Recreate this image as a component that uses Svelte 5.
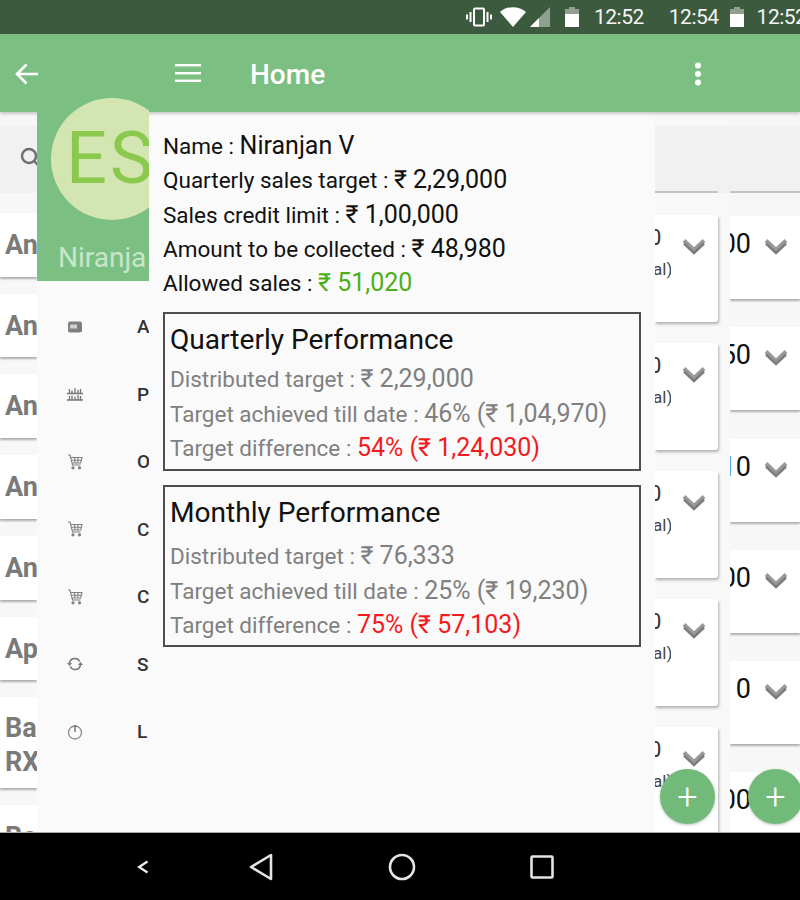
<script>
  const rows = [
    { h: 64, lines: ['An'] }, { h: 63, lines: ['An'] }, { h: 64, lines: ['An'] }, { h: 64, lines: ['An'] },
    { h: 64, lines: ['An'] }, { h: 63, lines: ['Ap'] }, { h: 91, lines: ['Ba', 'RX'] }, { h: 64, lines: ['Be'] }
  ];
  const rightRows = ['00', '50', '10', '00', '0', '00'];
  const menu = [
    { icon: 'card', label: 'A' }, { icon: 'stats', label: 'P' }, { icon: 'cart', label: 'O' },
    { icon: 'cart', label: 'C' }, { icon: 'cart', label: 'C' }, { icon: 'sync', label: 'S' }, { icon: 'power', label: 'L' }
  ];
  const info = [
    ['Name : ', 'Niranjan V', ''],
    ['Quarterly sales target : ', '₹ 2,29,000', ''],
    ['Sales credit limit : ', '₹ 1,00,000', ''],
    ['Amount to be collected : ', '₹ 48,980', ''],
    ['Allowed sales : ', '₹ 51,020', 'green']
  ];
  const boxes = [
    { cls: 'q', title: 'Quarterly Performance', target: '₹ 2,29,000', achieved: '46% (₹ 1,04,970)', diff: '54% (₹ 1,24,030)' },
    { cls: 'm', title: 'Monthly Performance', target: '₹ 76,333', achieved: '25% (₹ 19,230)', diff: '75% (₹ 57,103)' }
  ];
  const labels = { target: 'Distributed target : ', achieved: 'Target achieved till date : ', diff: 'Target difference : ' };
</script>

{#snippet chevron()}
  <svg class="chev" width="26" height="18" viewBox="0 0 26 18">
    <path d="M3 3.500 13 13 23 3.500" fill="none" stroke="#9a9a9a" stroke-width="4"/>
    <path d="M3 6.500 13 16 23 6.500" fill="none" stroke="#7d7d7d" stroke-width="2.500"/>
  </svg>
{/snippet}

{#snippet battery()}
  <svg width="14" height="20" viewBox="0 0 14 20">
    <path d="M4 0h6v2h4v18H0V2h4z" fill="#8fa08f"/>
    <rect y="7" width="14" height="13" fill="#fff"/>
  </svg>
{/snippet}

<div class="screen">
  <header class="status">
    <svg width="26" height="20" viewBox="0 0 26 20" fill="none" stroke="#fff">
      <rect x="8" y="1.500" width="10" height="17" rx="1" stroke-width="2"/>
      <path d="M4.500 5v10M21.500 5v10" stroke-width="2"/>
      <path d="M1 7.500v5M25 7.500v5" stroke-width="2"/>
    </svg>
    <svg class="wifi" width="26" height="20" viewBox="0 0 26 20"><path d="M0 5C7-1.500 19-1.500 26 5L13 20z" fill="#fff"/></svg>
    <svg class="signal" width="20" height="20" viewBox="0 0 20 20">
      <path d="M20 0v20H0z" fill="#8fa08f"/><path d="M9 11v9H0z" fill="#fff"/>
    </svg>
    <span class="bat1">{@render battery()}</span>
    <span class="time t1">12:52</span>
    <span class="time t2">12:54</span>
    <span class="bat2">{@render battery()}</span>
    <span class="time t3">12:52</span>
  </header>

  <header class="appbar">
    <svg class="back" width="24" height="22" viewBox="0 0 24 22" fill="none" stroke="#fff" stroke-width="2.600">
      <path d="M23 11H2M11.500 1.500 2 11l9.500 9.500"/>
    </svg>
    <svg class="burger" width="26" height="18" viewBox="0 0 26 18" fill="#fff">
      <rect width="26" height="2.400" y="0"/><rect width="26" height="2.400" y="8"/><rect width="26" height="2.400" y="15.600"/>
    </svg>
    <h1>Home</h1>
    <svg class="dots" width="8" height="24" viewBox="0 0 8 24" fill="#fff">
      <circle cx="4" cy="3.500" r="3"/><circle cx="4" cy="12" r="3"/><circle cx="4" cy="20.500" r="3"/>
    </svg>
  </header>

  <main class="content">
    <section class="col left">
      <div class="search">
        <svg class="mag" width="24" height="24" viewBox="0 0 24 24" fill="none" stroke="#6e6e6e" stroke-width="2.400">
          <circle cx="11" cy="10" r="7"/><path d="M16 15l6 6"/>
        </svg>
      </div>
      <div class="rows">
        {#each rows as r}
          <div class="row" class:two={r.lines.length > 1} style="height:{r.h}px">
            {#each r.lines as l}<b>{l}</b>{/each}
          </div>
        {/each}
      </div>
    </section>

    <nav class="drawer">
      <div class="dhead">
        <div class="avatar">ES</div>
        <div class="uname">Niranjan V</div>
      </div>
      <ul>
        {#each menu as m}
          <li>
            <span class="mi">
              {#if m.icon === 'card'}
                <svg width="16" height="12" viewBox="0 0 16 12">
                  <rect x="1" y="0.500" width="14" height="11" rx="2" fill="#7f7f7f"/><rect x="3" y="3.500" width="7" height="4" fill="#d0d0d0"/>
                </svg>
              {:else if m.icon === 'stats'}
                <svg width="16" height="14" viewBox="0 0 16 14" fill="none" stroke="#777" stroke-width="1.300">
                  <path d="M0 6.500h16M0 13h16M2.500 6V2M5 6V3.500M8 6V1M11 6V3M13.500 6V2M2.500 12.500V9M5 12.500V8.500M8 12.500V9.500M11 12.500V8M13.500 12.500V9"/>
                </svg>
              {:else if m.icon === 'cart'}
                <svg width="16" height="16" viewBox="0 0 16 16" fill="none" stroke="#808080" stroke-width="1.100">
                  <path d="M1 1h2l2.500 10h8M3.700 3.500H15l-1.300 5.500H5M7.500 3.500 8 9M11 3.500 10.800 9M4.500 6.200h10"/>
                  <circle cx="6" cy="13.800" r="1.100" fill="#808080"/><circle cx="12.500" cy="13.800" r="1.100" fill="#808080"/>
                </svg>
              {:else if m.icon === 'sync'}
                <svg width="16" height="14" viewBox="0 0 16 14" fill="none" stroke="#777" stroke-width="1.500">
                  <path d="M2.500 6a5.500 5.500 0 0 1 10.300-1.500M13.500 8a5.500 5.500 0 0 1-10.300 1.500"/>
                  <path d="M0 6h5L2.500 9zM16 8h-5l2.500-3z" fill="#777" stroke="none"/>
                </svg>
              {:else}
                <svg width="16" height="16" viewBox="0 0 16 16" fill="none" stroke="#8a8a8a" stroke-width="1.300">
                  <circle cx="8" cy="8.500" r="6.500"/><path d="M8 1v7" stroke="#666"/>
                </svg>
              {/if}
            </span>
            <span class="ml">{m.label}</span>
          </li>
        {/each}
      </ul>
    </nav>

    <section class="panel">
      {#each info as [k, v, c]}
        <p class="line"><span class="k">{k}</span><span class="v {c}">{v}</span></p>
      {/each}
      {#each boxes as b}
        <div class="box {b.cls}">
          <h2>{b.title}</h2>
          <p class="line g"><span class="k">{labels.target}</span><span class="v">{b.target}</span></p>
          <p class="line g"><span class="k">{labels.achieved}</span><span class="v">{b.achieved}</span></p>
          <p class="line g"><span class="k">{labels.diff}</span><span class="v red">{b.diff}</span></p>
        </div>
      {/each}
    </section>

    <section class="col cards">
      <div class="search"><i></i></div>
      <div class="cardlist">
        {#each [0, 1, 2, 3, 4] as c}
          <div class="card">
            <div class="ctext"><span class="num">0</span><span class="sub">al)</span></div>
            {@render chevron()}
          </div>
        {/each}
      </div>
      <button class="fab" aria-label="Add">+</button>
    </section>

    <section class="col right">
      <div class="search"><i></i></div>
      <div class="rlist">
        {#each rightRows as r}
          <div class="rrow">
            <span class="num">{r}</span>
            {@render chevron()}
          </div>
        {/each}
      </div>
      <button class="fab" aria-label="Add">+</button>
    </section>
  </main>

  <footer class="navbar">
    <svg width="12" height="14" viewBox="0 0 12 14" fill="none" stroke="#eee" stroke-width="2.200"><path d="M10.500 1.500 2 7l8.500 5.500"/></svg>
    <svg class="tri" width="24" height="28" viewBox="0 0 24 28" fill="none" stroke="#e4e4e4" stroke-width="2.600" stroke-linejoin="round"><path d="M22 2v24L2 14z"/></svg>
    <svg class="circ" width="28" height="28" viewBox="0 0 28 28" fill="none" stroke="#e4e4e4" stroke-width="2.600"><circle cx="14" cy="14" r="12"/></svg>
    <svg class="sq" width="24" height="24" viewBox="0 0 24 24" fill="none" stroke="#e4e4e4" stroke-width="2.600" stroke-linejoin="round"><rect x="1.500" y="1.500" width="21" height="21" rx="1"/></svg>
  </footer>
</div>

<style>
  :global(body) { margin: 0; background: #000; }
  .screen {
    width: 800px; height: 900px; display: flex; flex-direction: column; overflow: hidden;
    font-family: Roboto, "Noto Sans", "DejaVu Sans", sans-serif; background: #f7f7f7;
  }
  p, h1, h2, ul { margin: 0; padding: 0; }

  .status { height: 34px; flex: none; background: #3c5a3e; display: flex; align-items: center; padding-left: 466px; color: #fff; white-space: nowrap; box-sizing: border-box; overflow: hidden; }
  .status > * { flex: none; }
  .wifi { margin-left: 8px; }
  .signal { margin-left: 4px; }
  .bat1 { margin-left: 15px; display: flex; }
  .bat2 { margin-left: 11px; display: flex; }
  .time { font-size: 21px; letter-spacing: -.5px; color: #f4f4f4; }
  .t1 { margin-left: 15px; }
  .t2 { margin-left: 25px; }
  .t3 { margin-left: 13px; }

  .appbar {
    height: 78px; flex: none; background: #7cbf83; display: flex; align-items: center; color: #fff; box-sizing: border-box;
    box-shadow: 0 2px 3px rgba(0,0,0,.2); position: relative; z-index: 2; padding: 2px 0 0 15px;
  }
  .appbar > * { flex: none; }
  .back { margin-top: -1px; }
  .burger { margin-left: 136px; margin-top: -2px; }
  h1 { font-size: 28px; font-weight: 500; margin-left: 49px; }
  .dots { margin-left: 369px; }

  .content { flex: 1; min-height: 0; display: grid; grid-template-columns: 37px 112px 506px 75px 70px; }
  .col { position: relative; padding-top: 14px; min-width: 0; overflow: hidden; height: 720px; box-sizing: border-box; }
  .search { height: 67px; background: #f1f1f1; position: relative; box-sizing: border-box; }
  .search i { display: block; position: absolute; left: 0; bottom: 0; height: 2px; background: #c4c4c4; }
  .cards .search i { width: 63px; }
  .right .search i { width: 100%; }
  .mag { position: absolute; left: 18px; top: 20px; }

  .rows { padding-top: 20px; display: flex; flex-direction: column; gap: 17px; }
  .row {
    flex: none; background: #fff; box-shadow: 0 2px 2px rgba(0,0,0,.3); padding-left: 5px; overflow: hidden;
    display: flex; flex-direction: column; justify-content: center; color: #7a7a7a; font-size: 27px; line-height: 34px;
  }
  .row.two { padding-top: 4px; box-sizing: border-box; }

  .drawer { position: relative; z-index: 3; min-width: 0; overflow: hidden; margin-top: -34px; height: 754px; background: linear-gradient(#fafafa, #fafafa) 0 34px no-repeat; }
  .dhead { height: 203px; background: linear-gradient(#7cbf83, #7cbf83) 0 20px no-repeat; position: relative; overflow: hidden; }
  .avatar {
    position: absolute; left: 14px; top: 20px; width: 122px; height: 122px; border-radius: 50%;
    background: #d3e6b1; color: #8ac94d; font-size: 72px; line-height: 122px; padding-left: 15px; box-sizing: border-box; white-space: nowrap; letter-spacing: 3px;
  }
  .uname { position: absolute; left: 21px; top: 163px; width: 88px; overflow: hidden; font-size: 28px; color: #c8e6c9; white-space: nowrap; }
  .drawer ul { list-style: none; padding-top: 12px; }
  .drawer li { height: 67.500px; display: flex; align-items: center; }
  .mi { width: 16px; margin-left: 30px; display: flex; justify-content: center; }
  .ml { margin-left: 54px; font-size: 19px; font-weight: 500; color: #333; width: 12px; overflow: hidden; }

  .panel { background: #fafafa; padding: 17px 14px 0; height: 720px; box-sizing: border-box; color: #111; }
  .line { height: 34.250px; line-height: 34.250px; white-space: nowrap; }
  .k { font-size: 22.500px; white-space: pre; }
  .v { font-size: 25px; }
  .green { color: #4caf16; }
  .red { color: #f41a1f; }
  .g { color: #808080; }
  .box { border: 2px solid #4e4e4e; padding: 0 5px; width: 478px; box-sizing: border-box; }
  .q { margin-top: 12px; height: 159px; }
  .m { margin-top: 14px; height: 162px; }
  h2 { font-size: 28.100px; font-weight: 400; color: #111; line-height: 52px; }
  .q h2 { margin-bottom: -4px; }
  .m h2 { margin-bottom: 0; }

  .cards { background: #f8f8f8; }
  .cardlist { padding-top: 22px; display: flex; flex-direction: column; gap: 21px; }
  .card {
    width: 63px; height: 107px; flex: none; background: #fff; box-shadow: 1px 2px 3px rgba(0,0,0,.3); border-radius: 0 3px 3px 0;
    display: flex; position: relative; overflow: hidden;
  }
  .ctext { width: 16px; overflow: hidden; display: flex; flex-direction: column; flex: none; }
  .ctext .num { font-size: 22px; margin-top: 10px; color: #333; width: 7px; overflow: hidden; display: block; text-indent: -6px; }
  .ctext .sub { font-size: 17px; margin-top: 9px; color: #444; text-indent: -2px; white-space: nowrap; }
  .card .chev { margin: 22px 0 0 10px; flex: none; }

  .rlist { padding-top: 23px; display: flex; flex-direction: column; gap: 28.250px; }
  .rrow {
    height: 83px; flex: none; background: #fff; box-shadow: 0 2px 2px rgba(0,0,0,.3); overflow: hidden;
    display: flex; justify-content: flex-end; gap: 12px; padding-right: 11px; box-sizing: border-box; padding-top: 11px;
  }
  .rrow .num { font-size: 27px; color: #111; line-height: 34px; flex: none; }
  .rrow .chev { margin-top: 10px; flex: none; }

  .fab {
    position: absolute; width: 55px; height: 55px; border-radius: 50%; border: 0; background: #72ba7a; color: #fff; top: 657px;
    font: 300 36px/52px Roboto, sans-serif; padding: 0; box-shadow: 0 1px 3px rgba(0,0,0,.25);
  }
  .cards .fab { left: 5px; z-index: 3; }
  .right .fab { left: 18px; z-index: 3; }

  .navbar { flex: none; height: 68px; background: #000; border-top: 1px solid #aaa; box-sizing: border-box; display: flex; align-items: center; padding-left: 137px; }
  .navbar > * { flex: none; }
  .tri { margin-left: 100px; }
  .circ { margin-left: 115px; }
  .sq { margin-left: 114px; }
</style>
